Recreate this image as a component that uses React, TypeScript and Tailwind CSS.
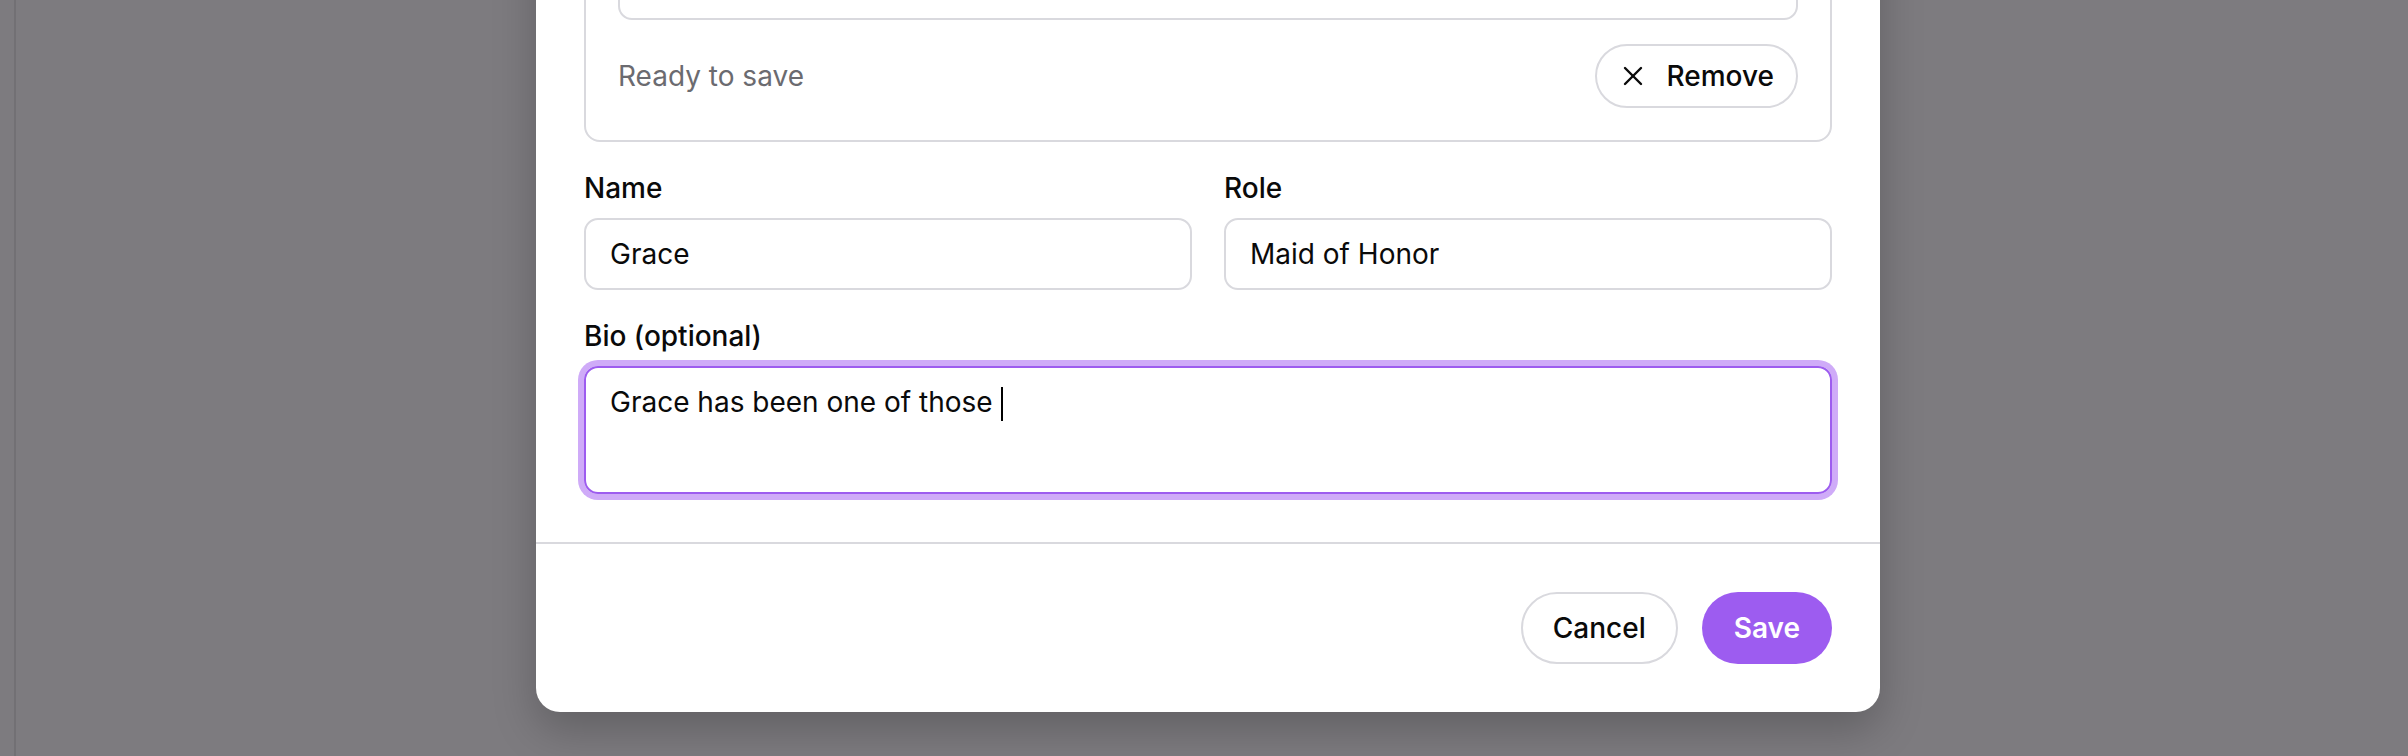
import React from "react";
import { X } from "lucide-react";

const Field = ({ label, value }: { label: string; value: string }) => (
	<div className="flex flex-col">
		<label className="mb-[10px] text-[28px] font-medium leading-[40px] text-[#0a0a0a]">
			{label}
		</label>
		<div className="flex h-[72px] items-center rounded-[14px] border-2 border-[#d9d9de] px-[24px] text-[28px] text-[#0a0a0a]">
			{value}
		</div>
	</div>
);

const App = () => {
	return (
		<div className="h-[756px] w-full overflow-hidden bg-[#7d7b7f] pl-[14px] font-['Inter',sans-serif]">
			<div className="flex h-full flex-col items-center justify-end border-l-2 border-[#727074] pb-[44px] pr-[8px]">
				<div className="w-[1344px] shrink-0 rounded-[24px] bg-white shadow-[0_18px_44px_rgba(0,0,0,0.22)]">
					<div className="flex flex-col gap-[26px] p-[48px]">
						<div className="flex flex-col gap-[24px] rounded-[16px] border-2 border-[#d9d9de] p-[32px]">
							<div className="h-[320px] rounded-[14px] border-2 border-[#d9d9de]" />
							<div className="flex items-center justify-between">
								<span className="text-[28px] text-[#6b6b70]">
									Ready to save
								</span>
								<button
									type="button"
									className="flex h-[64px] items-center gap-[18px] rounded-full border-2 border-[#d9d9de] pl-[20px] pr-[22px] text-[28px] font-medium text-[#0a0a0a]"
								>
									<X size={32} strokeWidth={1.8} />
									Remove
								</button>
							</div>
						</div>

						<div className="grid grid-cols-2 gap-x-[32px]">
							<Field label="Name" value="Grace" />
							<Field label="Role" value="Maid of Honor" />
						</div>

						<div className="flex flex-col">
							<label className="mb-[10px] text-[28px] font-medium leading-[40px] text-[#0a0a0a]">
								Bio (optional)
							</label>
							<div className="h-[128px] rounded-[14px] border-2 border-[#9d5cef] px-[24px] py-[14px] text-[28px] leading-[40px] text-[#0a0a0a] ring-[6px] ring-[#cfabf8]">
								Grace has been one of those{" "}
								<span className="inline-block h-[34px] w-[2px] bg-black align-middle" />
							</div>
						</div>
					</div>

					<div className="border-t-2 border-[#d9d9de]" />

					<div className="flex justify-end gap-[24px] p-[48px]">
						<button
							type="button"
							className="h-[72px] rounded-full border-2 border-[#d9d9de] px-[30px] text-[28px] font-medium text-[#0a0a0a]"
						>
							Cancel
						</button>
						<button
							type="button"
							className="h-[72px] rounded-full bg-[#9d5cf0] px-[32px] text-[28px] font-semibold text-white"
						>
							Save
						</button>
					</div>
				</div>
			</div>
		</div>
	);
};

export default App;
